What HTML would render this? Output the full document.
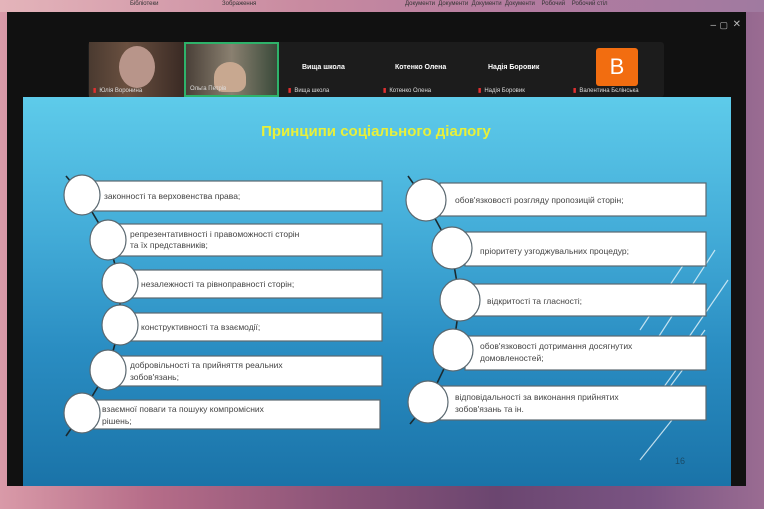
<!DOCTYPE html>
<html><head><meta charset="utf-8"><style>
html,body{margin:0;padding:0;width:764px;height:509px;overflow:hidden;background:#6a3f66;font-family:"Liberation Sans",sans-serif}
.bg{position:absolute;inset:0;background:linear-gradient(90deg,#d99aa8 0%,#b56c88 20%,#8a5378 45%,#6b4670 65%,#7a5483 85%,#9a6c92 100%)}
.top{position:absolute;left:0;top:0;width:764px;height:12px;background:linear-gradient(90deg,#e4b4ba,#c88aa0 40%,#b27ba0 70%,#a07aa0)}
.win{position:absolute;left:7px;top:12px;width:739px;height:474px;background:#111}
.bar{position:absolute;left:88px;top:42px;width:576px;height:55px;background:#1c1c1c;border-radius:3px}
.tile{position:absolute;top:0;height:55px;color:#fff;font-size:7px}
.nm{position:absolute;bottom:3px;left:4px;font-size:6px;color:#ddd;white-space:nowrap}
.nm b{color:#e03030;margin-right:3px}
.slide{position:absolute;left:23px;top:97px;width:708px;height:389px;background:linear-gradient(180deg,#5ecbea 0%,#43acd8 35%,#2a8dc2 65%,#1a73a8 100%)}
</style></head><body>
<div class="bg"></div>
<div class="top"></div>
<div style="position:absolute;top:1px;left:130px;font-size:6px;color:#333">Бібліотеки</div>
<div style="position:absolute;top:1px;left:222px;font-size:6px;color:#333">Зображення</div>
<div style="position:absolute;top:1px;left:405px;font-size:6px;color:#333">Документи &nbsp;Документи &nbsp;Документи &nbsp;Документи &nbsp; &nbsp;Робочий &nbsp; &nbsp;Робочий стіл</div>
<div class="win">
 <div style="position:absolute;right:30px;top:8px;color:#bbb;font-size:10px">–</div>
 <div style="position:absolute;right:18px;top:8px;color:#bbb;font-size:9px">▢</div>
 <div style="position:absolute;right:5px;top:7px;color:#bbb;font-size:10px">✕</div>
</div>
<div class="bar">
 <div class="tile" style="left:1px;width:95px;background:linear-gradient(90deg,#4a3a30,#6a5040 40%,#3a2a24)">
  <div style="position:absolute;left:30px;top:4px;width:36px;height:42px;border-radius:50%;background:#b8958a"></div>
  <div class="nm"><b>▮</b>Юлія Воронина</div></div>
 <div class="tile" style="left:96px;width:95px;background:linear-gradient(90deg,#4a4038,#8a8070 50%,#3a4a3a);box-sizing:border-box;border:2px solid #2eb26a">
  <div style="position:absolute;left:28px;top:18px;width:32px;height:30px;border-radius:50% 50% 30% 30%;background:#c8a890"></div>
  <div class="nm">Ольга Петрів</div></div>
 <div class="tile" style="left:196px;width:95px"><div style="position:absolute;top:22px;left:18px;font-weight:bold;font-size:7px">Вища школа</div><div class="nm"><b>▮</b>Вища школа</div></div>
 <div class="tile" style="left:291px;width:95px"><div style="position:absolute;top:22px;left:16px;font-weight:bold;font-size:7px">Котенко Олена</div><div class="nm"><b>▮</b>Котенко Олена</div></div>
 <div class="tile" style="left:386px;width:95px"><div style="position:absolute;top:22px;left:14px;font-weight:bold;font-size:7px">Надія Боровик</div><div class="nm"><b>▮</b>Надія Боровик</div></div>
 <div class="tile" style="left:481px;width:95px">
  <div style="position:absolute;left:27px;top:6px;width:42px;height:38px;background:#f26d10;border-radius:3px;font-size:22px;text-align:center;line-height:38px">B</div>
  <div class="nm"><b>▮</b>Валентина Бєлінська</div></div>
</div>
<div class="slide">
<svg width="708" height="389" viewBox="23 97 708 389" xmlns="http://www.w3.org/2000/svg" style="position:absolute;left:0;top:0" font-family="Liberation Sans, sans-serif">
 <g stroke="#e8f6fb" stroke-width="1.2" opacity="0.8">
  <line x1="700" y1="240" x2="640" y2="330"/><line x1="715" y1="250" x2="650" y2="350"/>
  <line x1="728" y1="280" x2="680" y2="350"/><line x1="705" y1="330" x2="640" y2="420"/>
  <line x1="690" y1="360" x2="660" y2="400"/><line x1="680" y1="410" x2="640" y2="460"/>
 </g>
 <text x="376" y="136" text-anchor="middle" fill="#e8f03a" font-weight="bold" font-size="15">Принципи соціального діалогу</text>
 <g fill="none" stroke="#1a2a30" stroke-width="1.6">
  <path d="M66 176 L82 195 L108 239 L120 283 L120 325 L108 370 L82 413 L66 436"/>
  <path d="M408 176 L425 200 L451 248 L460 300 L453 350 L428 402 L410 424"/>
 </g>
 <g fill="#fff" stroke="#5a6870" stroke-width="1.2">
  <rect x="92" y="181" width="290" height="30"/><rect x="118" y="224" width="264" height="32"/>
  <rect x="130" y="270" width="252" height="28"/><rect x="130" y="313" width="252" height="28"/>
  <rect x="118" y="356" width="264" height="30"/><rect x="92" y="400" width="288" height="29"/>
  <rect x="440" y="183" width="266" height="33"/><rect x="465" y="232" width="241" height="34"/>
  <rect x="472" y="284" width="234" height="32"/><rect x="465" y="336" width="241" height="34"/>
  <rect x="440" y="386" width="266" height="34"/>
  <ellipse cx="82" cy="195" rx="18" ry="20"/><ellipse cx="108" cy="240" rx="18" ry="20"/>
  <ellipse cx="120" cy="283" rx="18" ry="20"/><ellipse cx="120" cy="325" rx="18" ry="20"/>
  <ellipse cx="108" cy="370" rx="18" ry="20"/><ellipse cx="82" cy="413" rx="18" ry="20"/>
  <ellipse cx="426" cy="200" rx="20" ry="21"/><ellipse cx="452" cy="248" rx="20" ry="21"/>
  <ellipse cx="460" cy="300" rx="20" ry="21"/><ellipse cx="453" cy="350" rx="20" ry="21"/>
  <ellipse cx="428" cy="402" rx="20" ry="21"/>
 </g>
 <g fill="#444" font-size="8.5">
  <text x="104" y="199">законності та верховенства права;</text>
  <text x="130" y="237">репрезентативності і правоможності сторін</text><text x="130" y="248">та їх представників;</text>
  <text x="141" y="287">незалежності та рівноправності сторін;</text>
  <text x="141" y="330">конструктивності та взаємодії;</text>
  <text x="130" y="368">добровільності та прийняття реальних</text><text x="130" y="380">зобов'язань;</text>
  <text x="102" y="412">взаємної поваги та пошуку компромісних</text><text x="102" y="424">рішень;</text>
  <text x="455" y="203">обов'язковості розгляду пропозицій сторін;</text>
  <text x="480" y="254">пріоритету узгоджувальних процедур;</text>
  <text x="487" y="304">відкритості та гласності;</text>
  <text x="480" y="349">обов'язковості дотримання досягнутих</text><text x="480" y="361">домовленостей;</text>
  <text x="455" y="400">відповідальності за виконання прийнятих</text><text x="455" y="412">зобов'язань та ін.</text>
 </g>
 <text x="675" y="464" fill="#1a4a66" font-size="9">16</text>
</svg>
</div>
</body></html>
